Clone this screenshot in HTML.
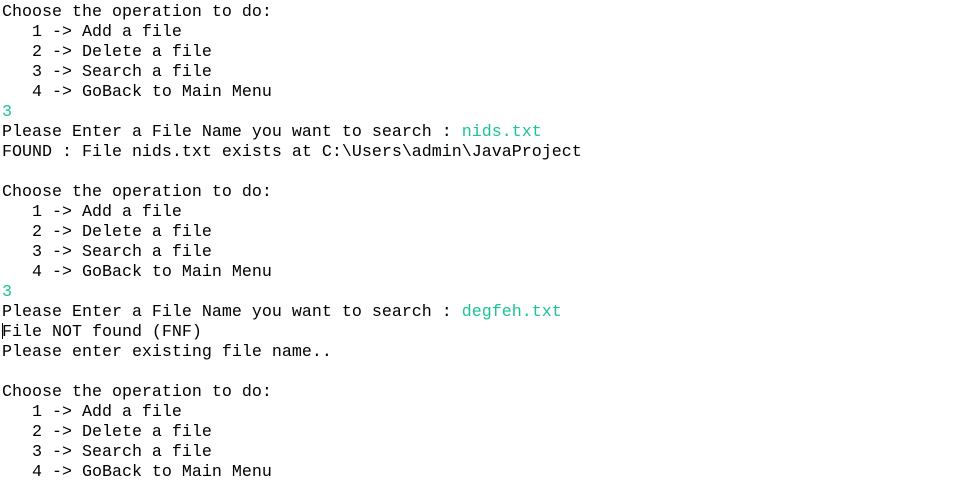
<!DOCTYPE html>
<html><head><style>
body{margin:0;background:#fff;width:977px;height:490px;overflow:hidden}
pre{margin:0;padding:3px 0 0 2px;font-family:"Liberation Mono","Courier New",monospace;font-size:16.67px;line-height:20px;color:#000}
.g{color:#1cc29a}
.c{display:inline-block;width:1px;height:16px;background:#000;vertical-align:-3px;margin-right:-1px}
</style></head><body><pre>Choose the operation to do:
   1 -> Add a file
   2 -> Delete a file
   3 -> Search a file
   4 -> GoBack to Main Menu
<span class="g">3</span>
Please Enter a File Name you want to search : <span class="g">nids.txt</span>
FOUND : File nids.txt exists at C:\Users\admin\JavaProject

Choose the operation to do:
   1 -> Add a file
   2 -> Delete a file
   3 -> Search a file
   4 -> GoBack to Main Menu
<span class="g">3</span>
Please Enter a File Name you want to search : <span class="g">degfeh.txt</span>
<span class="c"></span>File NOT found (FNF)
Please enter existing file name..

Choose the operation to do:
   1 -> Add a file
   2 -> Delete a file
   3 -> Search a file
   4 -> GoBack to Main Menu</pre></body></html>
